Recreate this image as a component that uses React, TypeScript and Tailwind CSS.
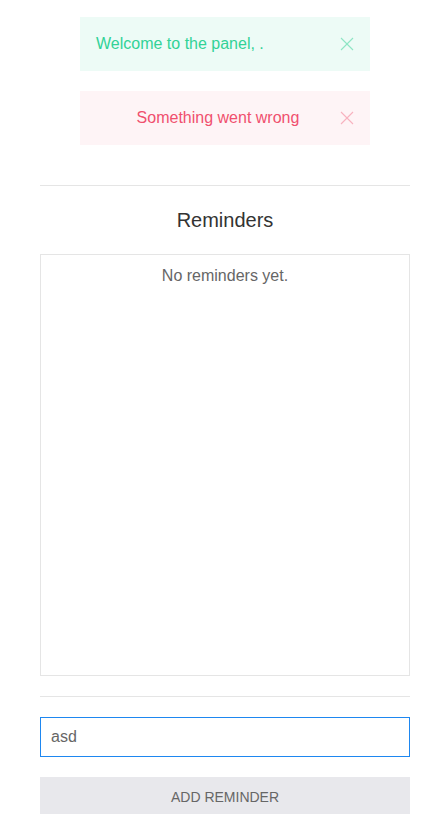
import React from 'react';

const CloseIcon = ({ className }: { className: string }) => (
  <svg width="14" height="14" viewBox="0 0 14 14" className={className}>
    <line x1="1" y1="1" x2="13" y2="13" stroke="currentColor" strokeWidth="1.1" />
    <line x1="13" y1="1" x2="1" y2="13" stroke="currentColor" strokeWidth="1.1" />
  </svg>
);

const App: React.FC = () => {
  return (
    <div className="w-[446px] h-[814px] overflow-hidden bg-white font-['Liberation_Sans',Arial,sans-serif] text-[#666]">
      <div className="ml-10 w-[370px]">
        <div className="flex flex-col items-center pt-[17px] gap-5">
          <div className="w-[290px] h-[54px] bg-[#edfbf6] text-[#32d296] flex items-center pl-4 pr-4">
            <span className="flex-1 text-base">Welcome to the panel, .</span>
            <CloseIcon className="text-[#32d296] opacity-50" />
          </div>
          <div className="w-[290px] h-[54px] bg-[#fef4f6] text-[#f0506e] flex items-center pl-4 pr-4">
            <span className="flex-1 text-base text-center">Something went wrong</span>
            <CloseIcon className="text-[#f0506e] opacity-40" />
          </div>
        </div>

        <div className="mt-10 border-t border-[#e5e5e5]" />

        <h2 className="mt-[20px] text-center text-[20px] leading-[28px] text-[#333]">Reminders</h2>

        <div className="mt-[20px] h-[422px] border border-[#e5e5e5] pt-[11px]">
          <p className="text-center text-base leading-[20px] text-[#666]">No reminders yet.</p>
        </div>

        <div className="mt-5 border-t border-[#e5e5e5]" />

        <div className="mt-5">
          <input
            defaultValue="asd"
            className="w-full h-10 border border-[#1e87f0] px-[10px] text-base text-[#666] outline-none"
          />
        </div>

        <div className="mt-5">
          <button className="w-full h-10 bg-[#e8e8ec] text-sm uppercase text-[#666]">
            Add reminder
          </button>
        </div>
      </div>
    </div>
  );
};

export default App;
